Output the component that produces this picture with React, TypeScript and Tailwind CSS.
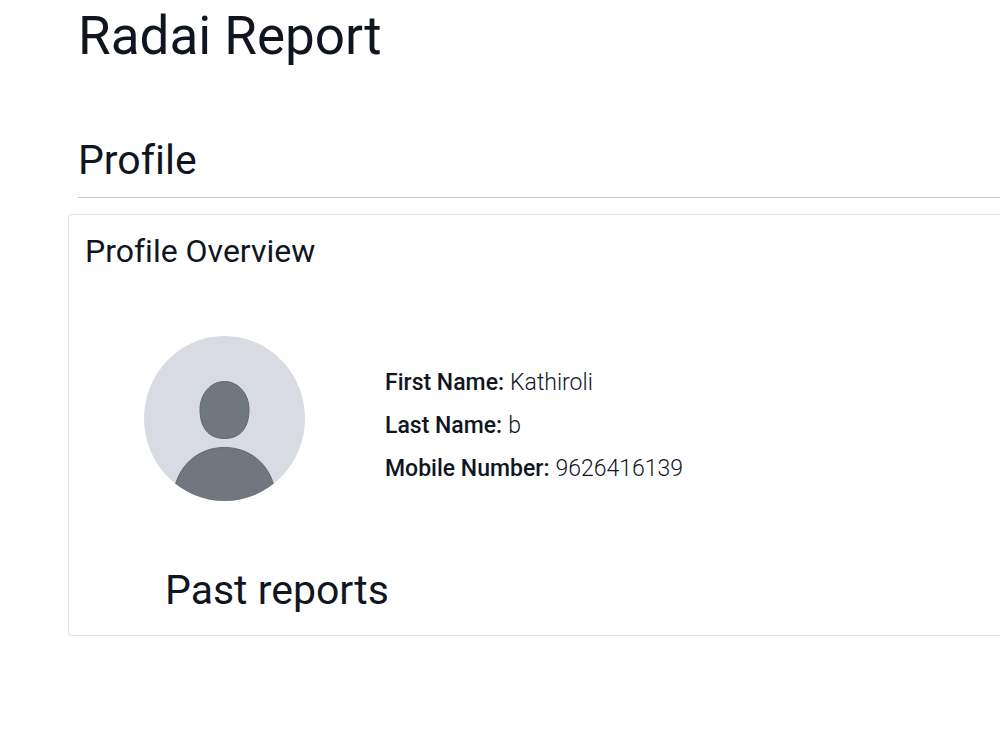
import React from 'react';

interface ProfileField {
  label: string;
  value: string;
}

const fields: ProfileField[] = [
  { label: 'First Name', value: 'Kathiroli' },
  { label: 'Last Name', value: 'b' },
  { label: 'Mobile Number', value: '9626416139' },
];

function Avatar() {
  return (
    <svg viewBox="0 0 161 166" className="w-[161px] h-[166px] shrink-0" role="img" aria-label="Profile">
      <defs>
        <clipPath id="avatar-clip">
          <ellipse cx="80.5" cy="82.5" rx="80.5" ry="82.5" />
        </clipPath>
      </defs>
      <ellipse cx="80.5" cy="82.5" rx="80.5" ry="82.5" fill="#d8dbe2" />
      <g clipPath="url(#avatar-clip)" fill="#70777f" stroke="#62686f" strokeWidth="1">
        <path d="M80.5 45.5C94.5 45.5 105 58 105 73.5C105 91 97 102.5 80.5 102.5C64 102.5 56 91 56 73.5C56 58 66.5 45.5 80.5 45.5Z" />
        <path d="M31 150C37 127 56 111.5 80.5 111.5C105 111.5 124 127 130 150L136 170H25Z" />
      </g>
    </svg>
  );
}

export default function App() {
  return (
    <div className="min-h-screen bg-white pl-[68px] pb-6 font-['Roboto',sans-serif] text-[#10161f] [font-variant-ligatures:none]">
      <header className="pl-[10px] pt-1">
        <h1 className="text-[53px] leading-[64px]">Radai Report</h1>
      </header>

      <main className="pt-[68px]">
        <h2 className="ml-[10px] border-b border-[#c6c8ca] pb-3 text-[41px] leading-[49px]">
          Profile
        </h2>

        <section className="mt-4 rounded-l border border-r-0 border-[#dfdfdf] pl-4 pt-4 pb-5">
          <h3 className="text-[32px] leading-10">Profile Overview</h3>

          <div className="flex items-center gap-20 pl-[59px] pt-[65px]">
            <Avatar />
            <dl className="flex flex-col gap-[13px] pt-[14px] text-[23px] leading-[30px]">
              {fields.map((field) => (
                <div key={field.label} className="flex gap-[6px]">
                  <dt className="font-medium">{field.label}:</dt>
                  <dd className="font-light">{field.value}</dd>
                </div>
              ))}
            </dl>
          </div>

          <h2 className="pl-20 pt-[63px] text-[41px] leading-[50px]">Past reports</h2>
        </section>
      </main>
    </div>
  );
}
